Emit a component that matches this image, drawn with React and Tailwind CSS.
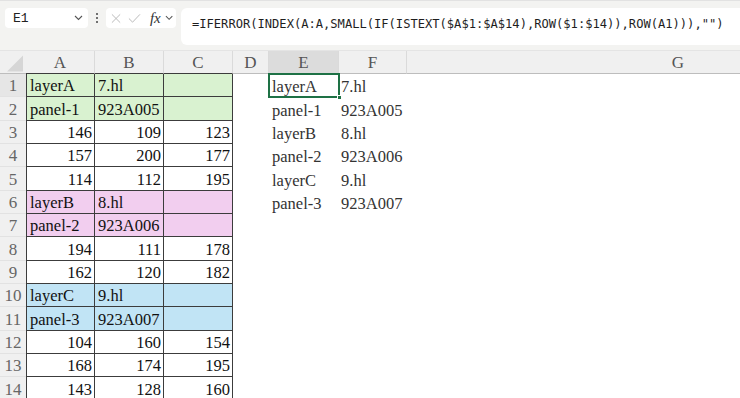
import React from "react";

const COLS = [
  { k: "A", w: 69 },
  { k: "B", w: 69 },
  { k: "C", w: 69 },
  { k: "D", w: 36 },
  { k: "E", w: 70 },
  { k: "F", w: 68 },
];

const G = { g: "bg-[#d9f2d0]", p: "bg-[#f2ceef]", b: "bg-[#c1e4f5]" };

const ROWS = [
  { t: "g", a: "layerA", b: "7.hl" },
  { t: "g", a: "panel-1", b: "923A005" },
  { n: [146, 109, 123] },
  { n: [157, 200, 177] },
  { n: [114, 112, 195] },
  { t: "p", a: "layerB", b: "8.hl" },
  { t: "p", a: "panel-2", b: "923A006" },
  { n: [194, 111, 178] },
  { n: [162, 120, 182] },
  { t: "b", a: "layerC", b: "9.hl" },
  { t: "b", a: "panel-3", b: "923A007" },
  { n: [104, 160, 154] },
  { n: [168, 174, 195] },
  { n: [143, 128, 160] },
];

const OUT = [
  ["layerA", "7.hl"],
  ["panel-1", "923A005"],
  ["layerB", "8.hl"],
  ["panel-2", "923A006"],
  ["layerC", "9.hl"],
  ["panel-3", "923A007"],
];

const serif = { fontFamily: '"Liberation Serif", "DejaVu Serif", serif' };

function Chevron({ className = "" }) {
  return (
    <svg width="9" height="6" viewBox="0 0 9 6" className={className}>
      <path d="M1 1l3.5 3.5L8 1" fill="none" stroke="#555" strokeWidth="1.1" />
    </svg>
  );
}

export default function App() {
  return (
    <div
      className="w-[740px] h-[398px] overflow-hidden bg-white text-[16.5px]"
      style={serif}
    >
      {/* formula bar */}
      <div className="h-[50px] bg-[#f3f3f1] border-t border-[#e2e2e2] flex items-start pt-[7px] pl-[5px]">
        <div className="w-[83px] h-[20px] bg-white rounded-[4px] flex items-center justify-between pl-[8px] pr-[5px]">
          <span className="text-[13px] text-[#222] leading-none" style={{ fontFamily: '"Liberation Mono", monospace' }}>
            E1
          </span>
          <Chevron />
        </div>
        <div className="w-[18px] h-[20px] flex flex-col items-center justify-center gap-[2px]">
          <span className="w-[2px] h-[2px] bg-[#444] rounded-full" />
          <span className="w-[2px] h-[2px] bg-[#444] rounded-full" />
          <span className="w-[2px] h-[2px] bg-[#444] rounded-full" />
        </div>
        <div className="w-[70px] h-[20px] bg-white rounded-[4px] flex items-center pl-[5px] pr-[3px]">
          <svg width="11" height="11" viewBox="0 0 11 11">
            <path d="M1 1l9 9M10 1l-9 9" stroke="#b5b5b5" strokeWidth="1" />
          </svg>
          <svg width="14" height="11" viewBox="0 0 14 11" className="ml-[7px]">
            <path d="M1 5.5l4 4L13 1" fill="none" stroke="#b5b5b5" strokeWidth="1" />
          </svg>
          <span className="ml-[9px] italic text-[15px] leading-none text-[#333]">fx</span>
          <Chevron className="ml-[4px]" />
        </div>
        <div className="flex-1 h-[37px] ml-[5px] bg-white rounded-l-[6px] pl-[11px] pt-[3px]">
          <span
            className="text-[12.1px] text-[#1e1e1e] whitespace-nowrap leading-[20px]"
            style={{ fontFamily: '"DejaVu Sans Mono", monospace' }}
          >
            =IFERROR(INDEX(A:A,SMALL(IF(ISTEXT($A$1:$A$14),ROW($1:$14)),ROW(A1))),"")
          </span>
        </div>
      </div>

      {/* column headers */}
      <div className="flex h-[24px] bg-[#f0f0f0] border-t border-[#e4e4e4] text-[#555] text-[17px] overflow-hidden">
        <div className="w-[26px] shrink-0 border-b border-[#bdbdbd] relative">
          <svg width="26" height="23" viewBox="0 0 26 23" className="absolute left-0 top-0">
            <path d="M7 20.5H23V4.5Z" fill="#d6d6d6" />
          </svg>
        </div>
        {COLS.map((c, i) => (
          <div
            key={c.k}
            style={{ width: c.w }}
            className={
              "shrink-0 flex items-end justify-center leading-[21px] border-b " +
              (i < 3 ? "border-b-[#3c3c3c] " : "border-b-[#bdbdbd] ") +
              (c.k === "E" ? "bg-[#dcdcdc] " : "") +
              "border-r border-r-[#dadada]"
            }
          >
            {c.k}
          </div>
        ))}
        <div className="w-[542px] shrink-0 flex items-end justify-center leading-[21px] border-b border-[#bdbdbd]">G</div>
      </div>

      {/* rows */}
      {ROWS.map((r, ri) => {
        const bg = r.t ? G[r.t] : "bg-white";
        const out = OUT[ri];
        return (
          <div key={ri} className="flex h-[23.33px]">
            <div
              className={
                "w-[26px] shrink-0 flex items-end justify-center leading-[21px] text-[#666] text-[17px] border-b border-[#e2e2e2] " +
                (ri === 0 ? "bg-[#e6e6e6]" : "bg-[#f0f0f0]")
              }
            >
              {ri + 1}
            </div>
            {[0, 1, 2].map((ci) => {
              const val = r.n ? r.n[ci] : ci === 0 ? r.a : ci === 1 ? r.b : "";
              return (
                <div
                  key={ci}
                  style={{ width: 69 }}
                  className={
                    "shrink-0 flex items-end leading-[21px] text-[#111] border-r border-b border-[#3c3c3c] overflow-hidden whitespace-nowrap " +
                    bg +
                    (ci === 0 ? " border-l" : "") +
                    (r.n ? " justify-end pr-[2px]" : " pl-[3px]")
                  }
                >
                  {val}
                </div>
              );
            })}
            <div className="w-[36px] shrink-0" />
            <div className="w-[70px] shrink-0 relative flex items-end pl-[3px] leading-[21px] text-[#333]">
              {out ? out[0] : ""}
              {ri === 0 && (
                <>
                  <div className="absolute -left-[1px] -top-[1px] -right-[1px] -bottom-[1px] border-2 border-[#1e7145]" />
                  <div className="absolute -right-[3px] -bottom-[3px] w-[5px] h-[5px] bg-[#1e7145] border border-white" />
                </>
              )}
            </div>
            <div className="w-[68px] shrink-0 flex items-end pl-[2px] leading-[21px] text-[#333] whitespace-nowrap">
              {out ? out[1] : ""}
            </div>
            <div className="flex-1" />
          </div>
        );
      })}
    </div>
  );
}
